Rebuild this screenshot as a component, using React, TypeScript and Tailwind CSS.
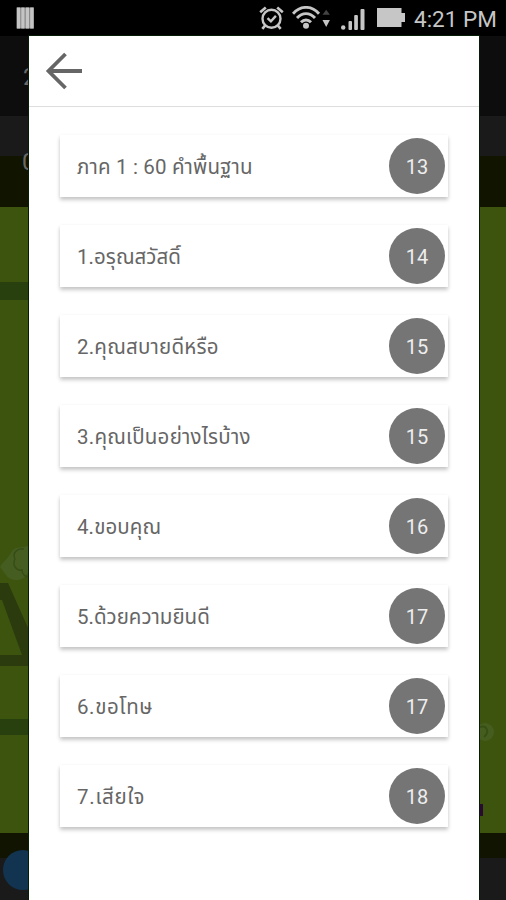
type Lesson = { title: string; page: number; tracking: string };

const lessons: Lesson[] = [
  { title: "ภาค 1 : 60 คำพื้นฐาน", page: 13, tracking: "tracking-[0.16px]" },
  { title: "1.อรุณสวัสดิ์", page: 14, tracking: "tracking-[0.05px]" },
  { title: "2.คุณสบายดีหรือ", page: 15, tracking: "tracking-[0.22px]" },
  { title: "3.คุณเป็นอย่างไรบ้าง", page: 15, tracking: "tracking-[0.24px]" },
  { title: "4.ขอบคุณ", page: 16, tracking: "tracking-[0.1px]" },
  { title: "5.ด้วยความยินดี", page: 17, tracking: "tracking-normal" },
  { title: "6.ขอโทษ", page: 17, tracking: "tracking-[0.6px]" },
  { title: "7.เสียใจ", page: 18, tracking: "tracking-[0.75px]" },
];

function StatusBar() {
  return (
    <header className="flex h-9 shrink-0 items-center bg-black pl-4 pr-[7px] text-[#c6c6c6]">
      <svg width="19" height="22" viewBox="0 0 19 22" fill="#c4c4c4">
        <rect x="0.5" y="0.5" width="17.5" height="21" fill="#8a8a8a" />
        <rect x="1" y="0.5" width="3.2" height="21" />
        <rect x="5.3" y="0.5" width="3.2" height="21" />
        <rect x="9.8" y="0.5" width="3.2" height="21" />
        <rect x="14.2" y="0.5" width="3.2" height="21" />
      </svg>
      <svg className="ml-auto" width="25" height="24" viewBox="0 0 25 24" fill="none" stroke="#c6c6c6" strokeWidth="2.4">
        <circle cx="12.5" cy="12.8" r="9" />
        <path d="M1.2 6.2 6.8 1.5M18.2 1.5l5.6 4.7M6.5 19.2l-3.2 3.6M18.5 19.2l3.2 3.6" strokeWidth="2.7" />
        <path d="m8.5 12.2 3.4 3.2 5-5.5" />
      </svg>
      <svg className="ml-2" width="39" height="24" viewBox="0 0 39 24" fill="none" stroke="#c6c6c6" strokeWidth="2.9">
        <path d="M1 7.7C8.5-.7 19.5-.7 27 7.7M5 12c5.3-5.8 12.7-5.8 18 0M9 16.3c3-3.1 7-3.1 10 0" />
        <circle cx="14" cy="19.8" r="3" fill="#c6c6c6" stroke="none" />
        <path d="m30.5 8.8 3.7-5 3.7 5z" fill="#444" stroke="none" />
        <path d="M30.5 14h7.4l-3.7 7z" fill="#c6c6c6" stroke="none" />
      </svg>
      <svg className="ml-[9px] mt-1" width="26" height="22" viewBox="0 0 26 22" fill="#c6c6c6">
        <circle cx="3.2" cy="18.5" r="2.2" />
        <rect x="8.5" y="12" width="3.5" height="9" rx="1" />
        <rect x="14.2" y="6" width="3.7" height="15" rx="1" />
        <rect x="20.5" y="0" width="4" height="21" rx="1" />
      </svg>
      <svg className="ml-[11px]" width="28" height="20" viewBox="0 0 28 20" fill="#c6c6c6">
        <path d="M0 0h24.5v5H28v9h-3.5v5H0z" />
      </svg>
      <span className="ml-[9px] mt-0.5 w-[85px] whitespace-nowrap text-[22.5px] leading-8">4:21 PM</span>
    </header>
  );
}

function DimmedPage() {
  return (
    <div className="flex h-full flex-col">
      <div className="flex h-20 bg-[#0d0d0d] pl-[23px] pt-[25px] text-2xl leading-8 text-[#696969]">2</div>
      <div className="h-10 bg-[#1a1a1a]" />
      <div className="h-[51px] bg-[#111500] pl-[22px] text-2xl leading-[12px] text-[#696969]">0</div>
      <svg className="block shrink-0" width="506" height="626" viewBox="0 207 506 626">
        <rect y="207" width="506" height="626" fill="#3d540e" />
        <path d="M0 282h29v18H0zM0 719h29v16H0z" fill="#27400e" />
        <path d="M0 567c3-6 7-7 11-14 3-7 10-5 18-7v25c-4 8-8 9-14 9-8 0-11-9-15-13z" fill="#455d20" />
        <path d="M24 549c-7-1-12 4-9 10-3 6 1 12 7 11 0 5 4 7 7 7" fill="none" stroke="#364e16" strokeWidth="1.5" />
        <path fillRule="evenodd" d="M0 583h8l21 47v36H0zM0 600v55h22L2 600z" fill="#2b3b0e" />
        <circle cx="485" cy="732" r="9" fill="#465d20" />
        <path d="M480 727c7-2 10 5 4 10" fill="none" stroke="#384f14" strokeWidth="2" />
        <path d="M477 804h6v12h-6z" fill="#280b2e" />
      </svg>
      <div className="h-[25px] bg-[#101400]" />
      <div className="relative grow overflow-hidden bg-[#1a1a1a]">
        <span className="absolute left-[475px] top-[6px] h-3 w-[5px] rounded-full bg-[#666]" />
      </div>
      <span className="absolute left-[3px] top-[814px] size-10 rounded-full bg-[#123450]" />
    </div>
  );
}

function LessonCard({ title, page, tracking }: Lesson) {
  return (
    <li className="flex h-[62px] items-center justify-between bg-white pl-[17px] pr-[3px] shadow-[0_3px_4px_rgba(0,0,0,0.2),0_1px_4px_rgba(0,0,0,0.06)]">
      <span className={`whitespace-nowrap pt-0.5 text-[20.5px] leading-8 text-[#666] ${tracking}`}>{title}</span>
      <span className="flex size-14 items-center justify-center rounded-full bg-[#757575] pt-0.5 text-[20px] text-[#eeeeee]">{page}</span>
    </li>
  );
}

export default function App() {
  return (
    <div className="flex h-[900px] w-[506px] flex-col overflow-hidden bg-black font-['Roboto','Noto_Sans_Thai',sans-serif]">
      <StatusBar />
      <div className="relative grow">
        <DimmedPage />
        <main className="absolute inset-y-0 left-[29px] w-[450px] bg-white shadow-[0_0_0_1px_#071c06]">
          <nav className="flex h-[71px] items-center border-b border-[#dedede] pl-4">
            <button aria-label="ย้อนกลับ">
              <svg width="40" height="38" viewBox="0 0 40 38" fill="none" stroke="#666" strokeWidth="3.8">
                <path d="M37 19H4M20.5 2 3.5 19l17 17" />
              </svg>
            </button>
          </nav>
          <ul className="flex flex-col gap-7 pl-[31px] pr-[31px] pt-7">
            {lessons.map((lesson) => (
              <LessonCard key={lesson.title} {...lesson} />
            ))}
          </ul>
        </main>
      </div>
    </div>
  );
}
